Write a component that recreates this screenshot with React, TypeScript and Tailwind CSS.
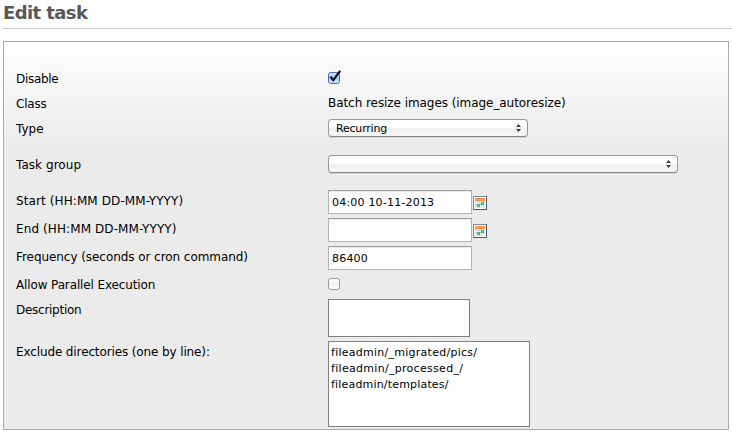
import type { ReactNode } from "react";

function Row({ label, height, labelClass = "", controlClass = "", children }: {
  label: string;
  height: string;
  labelClass?: string;
  controlClass?: string;
  children?: ReactNode;
}) {
  return (
    <div className={`flex items-start ${height}`}>
      <div className="w-[312px] shrink-0">
        <span className={`block w-fit whitespace-nowrap leading-5 ${labelClass}`}>{label}</span>
      </div>
      <div className={`flex items-start ${controlClass}`}>{children}</div>
    </div>
  );
}

function Select({ width, value = "" }: { width: string; value?: string }) {
  return (
    <div
      className={`flex h-[18px] items-center justify-between rounded-[4px] border border-[#989898] border-b-[#858585] bg-linear-to-b from-white from-45% via-[#f0f0f0] via-55% to-[#f7f7f7] pr-[6px] pl-[7px] shadow-[0_1px_0_#d4d4d4] ${width}`}
    >
      <span className="pt-[2px] text-[11px] leading-4 tracking-[-0.2px]">{value}</span>
      <svg width="5" height="8" viewBox="0 0 5 8" fill="#3c3c3c">
        <path d="M2.5 0 5 3H0zM2.5 8 0 5h5z" />
      </svg>
    </div>
  );
}

function Input({ value = "" }: { value?: string }) {
  return (
    <div className="flex h-6 w-[144px] items-center border border-[#b4b4b4] border-t-[#9c9c9c] bg-white pl-[3px] shadow-[inset_0_1px_0_#e8e8e8]">
      <span className="pt-[2px] text-[11px] leading-4 tracking-[0.2px]">{value}</span>
    </div>
  );
}

function Calendar() {
  return (
    <svg className="mt-[6px] ml-[1px]" width="14" height="14" viewBox="0 0 14 14" shapeRendering="crispEdges">
      <rect width="14" height="14" fill="#7d8b9b" />
      <path d="M13 0h1v14H0v-1h13z" fill="#4b5968" />
      <rect x="1" y="1" width="12" height="12" fill="#fff" />
      <rect x="2" y="2" width="10" height="3" fill="#fb8c4b" />
      <rect x="2" y="3" width="10" height="1" fill="#fda66e" />
      <rect x="2" y="5" width="10" height="7" fill="#c7dcf5" />
      <path d="M4 5h1v7H4zM7 5h1v7H7zM10 5h1v7h-1zM2 7h10v1H2zM2 10h10v1H2z" fill="#e6f0fc" />
      <path d="M8 6h3v3H8zM4 8h3v3H4z" fill="#61ad5d" />
      <path d="M9 7h1v1H9zM5 9h1v1H5zM7 8h1v1H7z" fill="#8cc589" />
    </svg>
  );
}

function Checkbox({ checked = false }: { checked?: boolean }) {
  return (
    <svg className="overflow-visible" width="12" height="12" viewBox="0 0 12 12">
      <defs>
        <linearGradient id={checked ? "on" : "off"} x2="0" y2="1">
          <stop stopColor={checked ? "#d6e6f8" : "#fff"} />
          <stop offset=".5" stopColor={checked ? "#a3cbf2" : "#f1f1f1"} />
          <stop offset="1" stopColor={checked ? "#c8f0ff" : "#fff"} />
        </linearGradient>
      </defs>
      <rect x=".5" y=".5" width="11" height="11" rx="2.2" fill={checked ? "url(#on)" : "url(#off)"} stroke={checked ? "#5867ab" : "#959595"} />
      {checked && <path d="M2.4 4.6 5.2 8.2 12.2-1.2" fill="none" stroke="#080f27" strokeWidth="2.2" />}
    </svg>
  );
}

export default function App() {
  return (
    <div className="h-[433px] w-[732px] overflow-hidden bg-white pl-[3px] font-['DejaVu_Sans',sans-serif] text-[12px] text-black">
      <h1 className="h-[29px] border-b border-[#c9c9c9] pt-[2px] text-[18px] leading-[22px] font-bold tracking-[-0.6px] text-[#585858]">
        <span>Edit task</span>
      </h1>
      <div className="mt-3 h-[389px] w-[726px] border border-[#a9a9a9] bg-[linear-gradient(#fff,#ebebeb_108px)] pt-6 pl-3">
        <Row label="Disable" height="h-[25px]" labelClass="pt-[3px] tracking-[-0.3px]" controlClass="pt-[6px]">
          <Checkbox checked />
        </Row>
        <Row label="Class" height="h-[25px]" labelClass="pt-[3px] tracking-[-0.2px]" controlClass="pt-[2px]">
          <span className="leading-5 tracking-[-0.06px]">Batch resize images (image_autoresize)</span>
        </Row>
        <Row label="Type" height="h-[36px]" labelClass="pt-[3px]" controlClass="pt-[3px]">
          <Select width="w-[200px]" value="Recurring" />
        </Row>
        <Row label="Task group" height="h-[38px]" labelClass="pt-[3px] tracking-[0.05px]" controlClass="pt-[3px]">
          <Select width="w-[350px]" />
        </Row>
        <Row label="Start (HH:MM DD-MM-YYYY)" height="h-[28px]" labelClass="pt-px tracking-[0.1px]">
          <Input value="04:00 10-11-2013" />
          <Calendar />
        </Row>
        <Row label="End (HH:MM DD-MM-YYYY)" height="h-[28px]" labelClass="pt-px tracking-[0.1px]">
          <Input />
          <Calendar />
        </Row>
        <Row label="Frequency (seconds or cron command)" height="h-[28px]" labelClass="pt-px tracking-[-0.06px]">
          <Input value="86400" />
        </Row>
        <Row label="Allow Parallel Execution" height="h-[25px]" labelClass="pt-px tracking-[-0.13px]" controlClass="pt-1">
          <Checkbox />
        </Row>
        <Row label="Description" height="h-[42px]" labelClass="pt-px tracking-[-0.27px]">
          <div className="h-[38px] w-[142px] border border-[#7f7f7f] bg-white" />
        </Row>
        <Row label="Exclude directories (one by line):" height="h-[86px]" labelClass="pt-px tracking-[-0.12px]">
          <div className="h-[86px] w-[202px] border border-[#7f7f7f] bg-white px-[2px] pt-[3px] text-[11px] leading-4 whitespace-pre">
            <div className="w-fit tracking-[0.26px]">fileadmin/_migrated/pics/</div>
            <div className="w-fit tracking-[0.3px]">fileadmin/_processed_/</div>
            <div className="w-fit tracking-[0.18px]">fileadmin/templates/</div>
          </div>
        </Row>
      </div>
    </div>
  );
}
